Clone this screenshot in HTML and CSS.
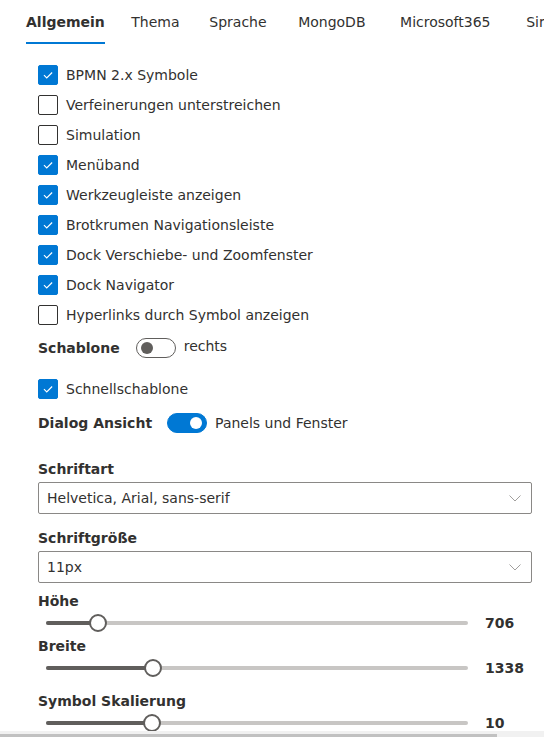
FILE: index.html
```html
<!DOCTYPE html>
<html lang="de">
<head>
<meta charset="utf-8">
<title>Einstellungen</title>
<link rel="stylesheet" href="styles.css">
</head>
<body>
<nav class="tabs">
  <div class="tab active"><span class="tab-text" data-text="Allgemein">Allgemein</span></div>
  <div class="tab"><span class="tab-text" data-text="Thema">Thema</span></div>
  <div class="tab"><span class="tab-text" data-text="Sprache">Sprache</span></div>
  <div class="tab"><span class="tab-text" data-text="MongoDB">MongoDB</span></div>
  <div class="tab"><span class="tab-text" data-text="Microsoft365">Microsoft365</span></div>
  <div class="tab"><span class="tab-text" data-text="Simulation">Simulation</span></div>
</nav>

<main class="panel">
  <div class="checks">
    <label class="check"><span class="box on"><svg viewBox="0 0 20 20"><path d="M5.5 10.2 L8.6 13.2 L14.6 7.2"/></svg></span>BPMN 2.x Symbole</label>
    <label class="check"><span class="box"></span>Verfeinerungen unterstreichen</label>
    <label class="check"><span class="box"></span>Simulation</label>
    <label class="check"><span class="box on"><svg viewBox="0 0 20 20"><path d="M5.5 10.2 L8.6 13.2 L14.6 7.2"/></svg></span>Menüband</label>
    <label class="check"><span class="box on"><svg viewBox="0 0 20 20"><path d="M5.5 10.2 L8.6 13.2 L14.6 7.2"/></svg></span>Werkzeugleiste anzeigen</label>
    <label class="check"><span class="box on"><svg viewBox="0 0 20 20"><path d="M5.5 10.2 L8.6 13.2 L14.6 7.2"/></svg></span>Brotkrumen Navigationsleiste</label>
    <label class="check"><span class="box on"><svg viewBox="0 0 20 20"><path d="M5.5 10.2 L8.6 13.2 L14.6 7.2"/></svg></span>Dock Verschiebe- und Zoomfenster</label>
    <label class="check"><span class="box on"><svg viewBox="0 0 20 20"><path d="M5.5 10.2 L8.6 13.2 L14.6 7.2"/></svg></span>Dock Navigator</label>
    <label class="check"><span class="box"></span>Hyperlinks durch Symbol anzeigen</label>
  </div>

  <div class="toggle-row first">
    <span class="toggle-label">Schablone</span>
    <span class="toggle"><span class="knob"></span></span>
    <span class="toggle-state">rechts</span>
  </div>

  <label class="check single"><span class="box on"><svg viewBox="0 0 20 20"><path d="M5.5 10.2 L8.6 13.2 L14.6 7.2"/></svg></span>Schnellschablone</label>

  <div class="toggle-row second">
    <span class="toggle-label dlg">Dialog Ansicht</span>
    <span class="toggle on"><span class="knob"></span></span>
    <span class="toggle-state">Panels und Fenster</span>
  </div>

  <div class="field font">
    <div class="field-label">Schriftart</div>
    <div class="dropdown"><span>Helvetica, Arial, sans-serif</span><svg class="chev" viewBox="0 0 12 7"><path d="M0.5 0.5 L6 6 L11.5 0.5"/></svg></div>
  </div>

  <div class="field size">
    <div class="field-label">Schriftgröße</div>
    <div class="dropdown"><span>11px</span><svg class="chev" viewBox="0 0 12 7"><path d="M0.5 0.5 L6 6 L11.5 0.5"/></svg></div>
  </div>

  <div class="slider-block s1">
    <div class="field-label">Höhe</div>
    <div class="slider">
      <div class="track"><div class="rail"></div><div class="fill" style="width:12.3%"></div><div class="thumb" style="left:12.3%"></div></div>
      <span class="value">706</span>
    </div>
  </div>

  <div class="slider-block s2">
    <div class="field-label">Breite</div>
    <div class="slider">
      <div class="track"><div class="rail"></div><div class="fill" style="width:25.4%"></div><div class="thumb" style="left:25.4%"></div></div>
      <span class="value">1338</span>
    </div>
  </div>

  <div class="slider-block s3">
    <div class="field-label">Symbol Skalierung</div>
    <div class="slider">
      <div class="track"><div class="rail"></div><div class="fill" style="width:25.2%"></div><div class="thumb" style="left:25.2%"></div></div>
      <span class="value">10</span>
    </div>
  </div>
</main>

<div class="hscroll"><div class="hthumb"></div></div>
</body>
</html>
```

FILE: styles.css
```css
html, body {
  margin: 0;
  padding: 0;
  background: #ffffff;
  overflow: hidden;
}
body {
  font-family: "DejaVu Sans", Verdana, sans-serif;
  font-size: 14px;
  color: #323130;
  width: 544px;
  height: 737px;
}

/* Tabs */
.tabs {
  display: flex;
  white-space: nowrap;
  padding-left: 18px;
  height: 44px;
  overflow: hidden;
}
.tab {
  position: relative;
  flex: none;
  padding: 0 8px;
  margin-right: 8px;
  height: 44px;
  line-height: 44px;
  color: #323130;
}
.tab-text {
  display: inline-grid;
  justify-items: center;
}
.tab-text::after {
  content: attr(data-text);
  font-weight: 700;
  height: 0;
  visibility: hidden;
  overflow: hidden;
}
.tab.active {
  font-weight: 700;
}
.tab.active::before {
  content: "";
  position: absolute;
  left: 8px;
  right: 8px;
  bottom: 0;
  height: 2px;
  background: #0078d4;
}

/* Panel */
.panel {
  padding: 21px 12px 0 38px;
}

.checks {
  display: flex;
  flex-direction: column;
  gap: 10px;
}
.check {
  display: flex;
  align-items: center;
  height: 20px;
  line-height: 20px;
}
.box {
  flex: none;
  box-sizing: border-box;
  width: 20px;
  height: 20px;
  border: 1px solid #323130;
  border-radius: 2px;
  margin-right: 8px;
  display: flex;
}
.box.on {
  background: #0078d4;
  border-color: #0078d4;
}
.box svg {
  width: 18px;
  height: 18px;
}
.box svg path {
  fill: none;
  stroke: #ffffff;
  stroke-width: 1.3;
}
.check.single {
  margin-top: 21px;
}

/* Toggles */
.toggle-row {
  display: flex;
  align-items: center;
  height: 20px;
}
.toggle-row.first {
  margin-top: 13px;
}
.toggle-row.second {
  margin-top: 14px;
}
.toggle-label {
  font-weight: 700;
  margin-right: 16px;
}
.toggle-label.dlg {
  margin-right: 15px;
}
.toggle {
  box-sizing: border-box;
  width: 40px;
  height: 20px;
  border: 1px solid #605e5c;
  border-radius: 10px;
  display: flex;
  align-items: center;
  padding: 0 4px;
}
.toggle .knob {
  width: 12px;
  height: 12px;
  border-radius: 50%;
  background: #605e5c;
}
.toggle.on {
  background: #0078d4;
  border-color: #0078d4;
  justify-content: flex-end;
}
.toggle.on .knob {
  background: #ffffff;
}
.toggle-state {
  margin-left: 8px;
  position: relative;
  top: -2px;
}
.toggle-row.second .toggle-state {
  top: 0;
}

/* Fields */
.field-label {
  font-weight: 700;
  height: 20px;
  line-height: 20px;
}
.field.font {
  margin-top: 26px;
}
.field.size {
  margin-top: 14px;
}
.field .field-label {
  margin-bottom: 3px;
}
.dropdown {
  box-sizing: border-box;
  height: 32px;
  border: 1px solid #8a8886;
  border-radius: 2px;
  display: flex;
  align-items: center;
  justify-content: space-between;
  padding: 0 10px 0 8px;
}
.chev {
  width: 12px;
  height: 7px;
}
.chev path {
  fill: none;
  stroke: #a19f9d;
  stroke-width: 1;
}

/* Sliders */
.slider-block.s1 {
  margin-top: 8px;
}
.slider-block.s2 {
  margin-top: 3px;
}
.slider-block.s3 {
  margin-top: 13px;
}
.slider {
  display: flex;
  align-items: center;
  height: 20px;
  margin-top: 2px;
}
.track {
  position: relative;
  flex: 1;
  height: 20px;
  margin: 0 8px;
}
.rail, .fill {
  position: absolute;
  top: 8px;
  left: 0;
  height: 4px;
  border-radius: 4px;
}
.rail {
  right: 0;
  background: #c8c6c4;
}
.fill {
  background: #605e5c;
}
.thumb {
  position: absolute;
  top: 1px;
  box-sizing: border-box;
  width: 18px;
  height: 18px;
  margin-left: -9px;
  border: 2px solid #605e5c;
  border-radius: 50%;
  background: #ffffff;
}
.value {
  flex: none;
  width: 47px;
  margin-left: 9px;
  font-weight: 700;
  color: #323130;
}

/* Cut-off horizontal scrollbar at the bottom edge */
.hscroll {
  position: fixed;
  left: 0;
  right: 0;
  bottom: 0;
  height: 6px;
  background: #f1f1f1;
}
.hthumb {
  margin-top: 3px;
  width: 497px;
  height: 3px;
  background: #c1c1c1;
}
```
